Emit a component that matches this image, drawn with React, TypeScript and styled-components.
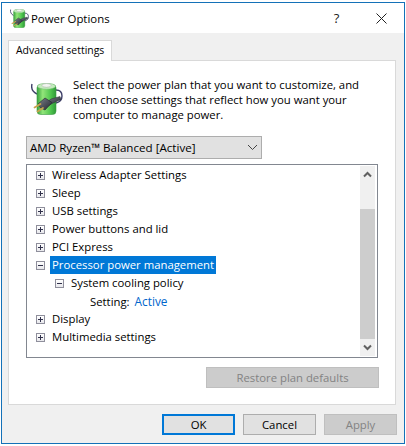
import React from "react";
import styled, { createGlobalStyle } from "styled-components";

const Global = createGlobalStyle`
  html, body { margin: 0; padding: 0; background: #fff; }
  body { width: 406px; height: 446px; overflow: hidden; font-family: "Open Sans", "Noto Sans", sans-serif; }
  * { box-sizing: border-box; }
`;

const Stage = styled.div`
  width: 406px;
  height: 446px;
  padding: 2px 1px 2px 1px;
  background: #fff;
`;

const Win = styled.div`
  width: 404px;
  height: 442px;
  border: 1px solid #1471b8;
  display: flex;
  flex-direction: column;
  background: #f0f0f0;
`;

const TitleBar = styled.div`
  height: 30px;
  flex: none;
  background: #fff;
  display: flex;
  align-items: center;
  padding-left: 8px;
`;

const TitleText = styled.div`
  font-size: 11.4px;
  color: #000;
  margin-left: 2px;
  flex: 1;
`;

const TitleBtn = styled.div`
  width: 45px;
  height: 30px;
  display: flex;
  align-items: center;
  justify-content: center;
  color: #222;
  font-size: 13px;
`;

const Client = styled.div`
  flex: 1;
  padding: 7px 7px 0 6px;
  display: flex;
  flex-direction: column;
`;

const Tab = styled.div`
  width: 104px;
  height: 21px;
  background: #fff;
  border: 1px solid #d9d9d9;
  border-bottom: none;
  font-size: 10.45px;
  color: #000;
  line-height: 19px;
  padding-left: 7px;
  white-space: nowrap;
  position: relative;
  z-index: 1;
  margin-bottom: -1px;
`;

const Panel = styled.div`
  height: 345px;
  width: 388px;
  background: #fff;
  border: 1px solid #d9d9d9;
  padding: 0 17px 0 17px;
  display: flex;
  flex-direction: column;
`;

const Intro = styled.div`
  display: flex;
  height: 75px;
  padding: 16px 0 0 5px;
`;

const IconSlot = styled.div`
  margin-top: 6px;
  flex: none;
  height: 32px;
`;

const IntroText = styled.div`
  margin-left: 10px;
  font-size: 11.33px;
  line-height: 15px;
  color: #000;
  white-space: nowrap;
`;

const Combo = styled.div`
  width: 236px;
  height: 23px;
  background: #e1e1e1;
  border: 1px solid #adadad;
  display: flex;
  align-items: center;
  justify-content: space-between;
  font-size: 11.6px;
  padding: 0 3px 0 3px;
  color: #000;
  flex: none;
`;

const Tree = styled.div`
  margin-top: 5px;
  width: 352px;
  height: 194px;
  border: 1px solid #828790;
  background: #fff;
  display: flex;
  justify-content: space-between;
  padding: 1px 2px 1px 0;
  flex: none;
`;

const Rows = styled.div`
  padding: 0 0 0 9px;
  flex: 1;
`;

const Row = styled.div<{ $indent?: number }>`
  height: 18px;
  display: flex;
  align-items: center;
  padding-left: ${(p) => (p.$indent ?? 0) * 19}px;
  font-size: 11.33px;
  white-space: nowrap;
  color: #000;
`;

const Box = styled.span<{ $open?: boolean }>`
  width: 9px;
  height: 9px;
  border: 1px solid #8f8f9c;
  background: linear-gradient(#fff, #e8e8ec);
  position: relative;
  flex: none;
  margin-right: 5px;
  &::before {
    content: "";
    position: absolute;
    left: 1px;
    top: 3px;
    width: 5px;
    height: 1px;
    background: #30304a;
  }
  ${(p) =>
    p.$open
      ? ""
      : `&::after {
    content: "";
    position: absolute;
    left: 3px;
    top: 1px;
    width: 1px;
    height: 5px;
    background: #30304a;
  }`}
`;

const Label = styled.span<{ $selected?: boolean }>`
  height: 18px;
  line-height: 18px;
  padding: 0 2px;
  background: ${(p) => (p.$selected ? "#0078d7" : "transparent")};
  color: ${(p) => (p.$selected ? "#fff" : "#000")};
`;

const SettingRow = styled(Row)`
  padding-left: 54px;
`;

const ActiveLink = styled.span`
  color: #0066cc;
  margin-left: 5px;
  font-size: 11.8px;
`;

const ScrollBar = styled.div`
  width: 15px;
  background: #f0f0f0;
  display: flex;
  flex-direction: column;
  flex: none;
`;

const Arrow = styled.div`
  height: 17px;
  display: flex;
  align-items: center;
  justify-content: center;
`;

const Track = styled.div`
  flex: 1;
  display: flex;
  flex-direction: column;
`;

const Thumb = styled.div`
  height: 130px;
  margin-top: 26px;
  background: #cdcdcd;
`;

const RestoreRow = styled.div`
  display: flex;
  justify-content: flex-end;
  margin-top: 9px;
  width: 353px;
`;

const Restore = styled.div`
  width: 173px;
  height: 21px;
  background: #cccccc;
  border: 1px solid #bfbfbf;
  color: #838383;
  font-size: 11.33px;
  display: flex;
  align-items: center;
  justify-content: center;
`;

const Footer = styled.div`
  display: flex;
  justify-content: flex-start;
  padding: 9px 0 0 154px;
  gap: 8px;
`;

const Btn = styled.div<{ $variant?: "default" | "disabled" }>`
  width: 73px;
  height: 21px;
  font-size: 11.33px;
  display: flex;
  align-items: center;
  justify-content: center;
  background: ${(p) => (p.$variant === "disabled" ? "#cccccc" : "#e1e1e1")};
  color: ${(p) => (p.$variant === "disabled" ? "#838383" : "#000")};
  border: ${(p) =>
    p.$variant === "default"
      ? "2px solid #0078d7"
      : p.$variant === "disabled"
      ? "1px solid #bfbfbf"
      : "1px solid #adadad"};
`;

const BatteryIcon = ({ size, id }: { size: number; id: string }) => (
  <svg width={size} height={size} viewBox="0 0 32 32" style={{ flex: "none", display: "block" }}>
    <defs>
      <linearGradient id={`${id}g`} x1="0" x2="1" y1="0" y2="0">
        <stop offset="0" stopColor="#35a23c" />
        <stop offset="0.3" stopColor="#93e57a" />
        <stop offset="0.7" stopColor="#52c750" />
        <stop offset="1" stopColor="#2e9a38" />
      </linearGradient>
      <linearGradient id={`${id}p`} x1="0" x2="1" y1="0" y2="1">
        <stop offset="0" stopColor="#7a808a" />
        <stop offset="1" stopColor="#23262e" />
      </linearGradient>
    </defs>
    <path d="M1 1c-1 4 1 8 5 10" fill="none" stroke="#3e3f68" strokeWidth="1.4" />
    <path d="M25 7c4 0 6 2 6 6 0 4-2 6-6 7" fill="none" stroke="#3e3f68" strokeWidth="1.4" />
    <rect x="6" y="1.5" width="19" height="30" rx="3.5" fill={`url(#${id}g)`} stroke="#3d9a45" strokeWidth="0.6" />
    <ellipse cx="15.5" cy="3.2" rx="9" ry="3" fill="#c4ebbd" stroke="#77bb77" strokeWidth="0.5" />
    <ellipse cx="15.5" cy="2.4" rx="4.5" ry="1.9" fill="#f2f5f0" stroke="#9aa89a" strokeWidth="0.5" />
    <path d="M15 20l5-4 9-2.5 1 3-8 3.5-5 3z" fill={`url(#${id}p)`} stroke="#2a2c34" strokeWidth="0.5" />
    <path d="M14 15l7 4.5-7 7.5-5-2.5-1.5-4z" fill={`url(#${id}p)`} stroke="#23252c" strokeWidth="0.6" />
    <path d="M3.5 24.5l6-3.5M6.5 28.5l5.5-3.5" stroke="#c9a24d" strokeWidth="1.7" strokeLinecap="round" />
  </svg>
);

const Chevron = ({ up, color, w = 2 }: { up?: boolean; color: string; w?: number }) => (
  <svg width="9" height="7" viewBox="0 0 9 7">
    <path d={up ? "M1 5.5 L4.5 2 L8 5.5" : "M1 1.5 L4.5 5 L8 1.5"} fill="none" stroke={color} strokeWidth={w} />
  </svg>
);

export default function App() {
  return (
    <>
      <Global />
      <Stage>
        <Win>
          <TitleBar>
            <BatteryIcon size={19} id="small" />
            <TitleText>Power Options</TitleText>
            <TitleBtn>?</TitleBtn>
            <TitleBtn>
              <svg width="11" height="11" viewBox="0 0 11 11">
                <path d="M0.5 0.5L10.5 10.5M10.5 0.5L0.5 10.5" stroke="#222" strokeWidth="1" fill="none" />
              </svg>
            </TitleBtn>
          </TitleBar>
          <Client>
            <Tab>Advanced settings</Tab>
            <Panel>
              <Intro>
                <IconSlot>
                  <BatteryIcon size={32} id="large" />
                </IconSlot>
                <IntroText>
                  Select the power plan that you want to customize, and
                  <br />
                  then choose settings that reflect how you want your
                  <br />
                  computer to manage power.
                </IntroText>
              </Intro>
              <Combo>
                <span>AMD Ryzen™ Balanced [Active]</span>
                <svg width="11" height="7" viewBox="0 0 11 7">
                  <path d="M1 1L5.5 5.5L10 1" stroke="#444" strokeWidth="1" fill="none" />
                </svg>
              </Combo>
              <Tree>
                <Rows>
                  <Row><Box /><Label>Wireless Adapter Settings</Label></Row>
                  <Row><Box /><Label>Sleep</Label></Row>
                  <Row><Box /><Label>USB settings</Label></Row>
                  <Row><Box /><Label>Power buttons and lid</Label></Row>
                  <Row><Box /><Label>PCI Express</Label></Row>
                  <Row><Box $open /><Label $selected>Processor power management</Label></Row>
                  <Row $indent={1}><Box $open /><Label>System cooling policy</Label></Row>
                  <SettingRow>
                    Setting:<ActiveLink>Active</ActiveLink>
                  </SettingRow>
                  <Row><Box /><Label>Display</Label></Row>
                  <Row><Box /><Label>Multimedia settings</Label></Row>
                </Rows>
                <ScrollBar>
                  <Arrow><Chevron up color="#606060" /></Arrow>
                  <Track><Thumb /></Track>
                  <Arrow><Chevron color="#606060" /></Arrow>
                </ScrollBar>
              </Tree>
              <RestoreRow>
                <Restore>Restore plan defaults</Restore>
              </RestoreRow>
            </Panel>
            <Footer>
              <Btn $variant="default">OK</Btn>
              <Btn>Cancel</Btn>
              <Btn $variant="disabled">Apply</Btn>
            </Footer>
          </Client>
        </Win>
      </Stage>
    </>
  );
}
